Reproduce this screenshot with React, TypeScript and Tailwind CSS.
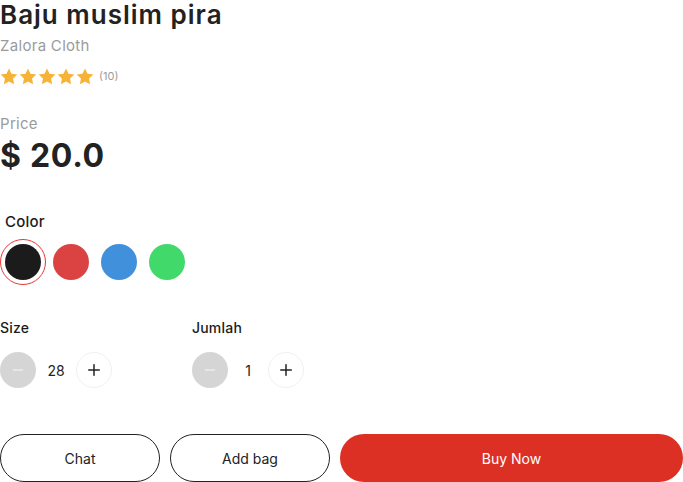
import { Minus, Plus } from "lucide-react";

const colors = ["#1b1b1b", "#db4343", "#4190db", "#42d96b"];

function Star() {
  return (
    <svg width="18" height="17" viewBox="0 0 24 23" fill="#f7b336">
      <path d="M12 0.8l3.4 7.1 7.8 1-5.7 5.4 1.4 7.7L12 18.3 5.1 22l1.4-7.7L0.8 8.9l7.8-1z" />
    </svg>
  );
}

function Stepper({ label, value, left }: { label: string; value: string; left?: boolean }) {
  return (
    <div className={left ? "w-[192px]" : ""}>
      <p className="text-[14px] font-medium text-[#1b1b1b] leading-none tracking-[0.2px]">{label}</p>
      <div className="flex items-center mt-[17px]">
        <button className="w-9 h-9 rounded-full bg-[#d5d5d5] flex items-center justify-center">
          <Minus size={16} color="#ececec" strokeWidth={2} />
        </button>
        <span className="w-10 text-center text-[14px] text-[#222]">{value}</span>
        <button className="w-9 h-9 rounded-full bg-white border border-[#f0f0f0] flex items-center justify-center">
          <Plus size={18} color="#222" strokeWidth={2} />
        </button>
      </div>
    </div>
  );
}

export default function App() {
  return (
    <div className="w-[683px] h-[482px] overflow-hidden bg-white font-['Inter','Liberation_Sans',sans-serif]">
      <h1 className="text-[26px] font-semibold text-[#222] leading-none pt-[2px] tracking-[1px]">Baju muslim pira</h1>
      <p className="text-[15px] text-[#9b9b9b] leading-none mt-[10px] tracking-[0.3px]">Zalora Cloth</p>
      <div className="flex items-center mt-[15px]">
        <div className="flex gap-[1px]">
          {[0, 1, 2, 3, 4].map((i) => (
            <Star key={i} />
          ))}
        </div>
        <span className="ml-[5px] text-[11px] text-[#9b9b9b]">(10)</span>
      </div>

      <p className="text-[15px] text-[#9b9b9b] leading-none mt-[31px] tracking-[0.3px]">Price</p>
      <p className="text-[32px] font-bold text-[#222] leading-none mt-[9px] tracking-[0.7px]">$ 20.0</p>

      <p className="text-[15px] font-medium text-[#1b1b1b] leading-none mt-[42px] ml-[5px] tracking-[0.2px]">Color</p>
      <div className="flex items-center gap-3 mt-[15px] ml-[5px]">
        {colors.map((c, i) => (
          <div key={c} className="relative w-9 h-9 rounded-full" style={{ backgroundColor: c }}>
            {i === 0 && <div className="absolute -inset-[5px] rounded-full border border-[#e03a33]" />}
          </div>
        ))}
      </div>

      <div className="flex mt-[41px]">
        <Stepper label="Size" value="28" left />
        <Stepper label="Jumlah" value="1" />
      </div>

      <div className="flex gap-[10px] mt-[46px]">
        <button className="w-[160px] h-[48px] rounded-full border border-[#222] text-[14px] text-[#222]">Chat</button>
        <button className="w-[160px] h-[48px] rounded-full border border-[#222] text-[14px] text-[#222]">Add bag</button>
        <button className="flex-1 h-[48px] rounded-full bg-[#dc3024] text-[14px] text-white">Buy Now</button>
      </div>
    </div>
  );
}
